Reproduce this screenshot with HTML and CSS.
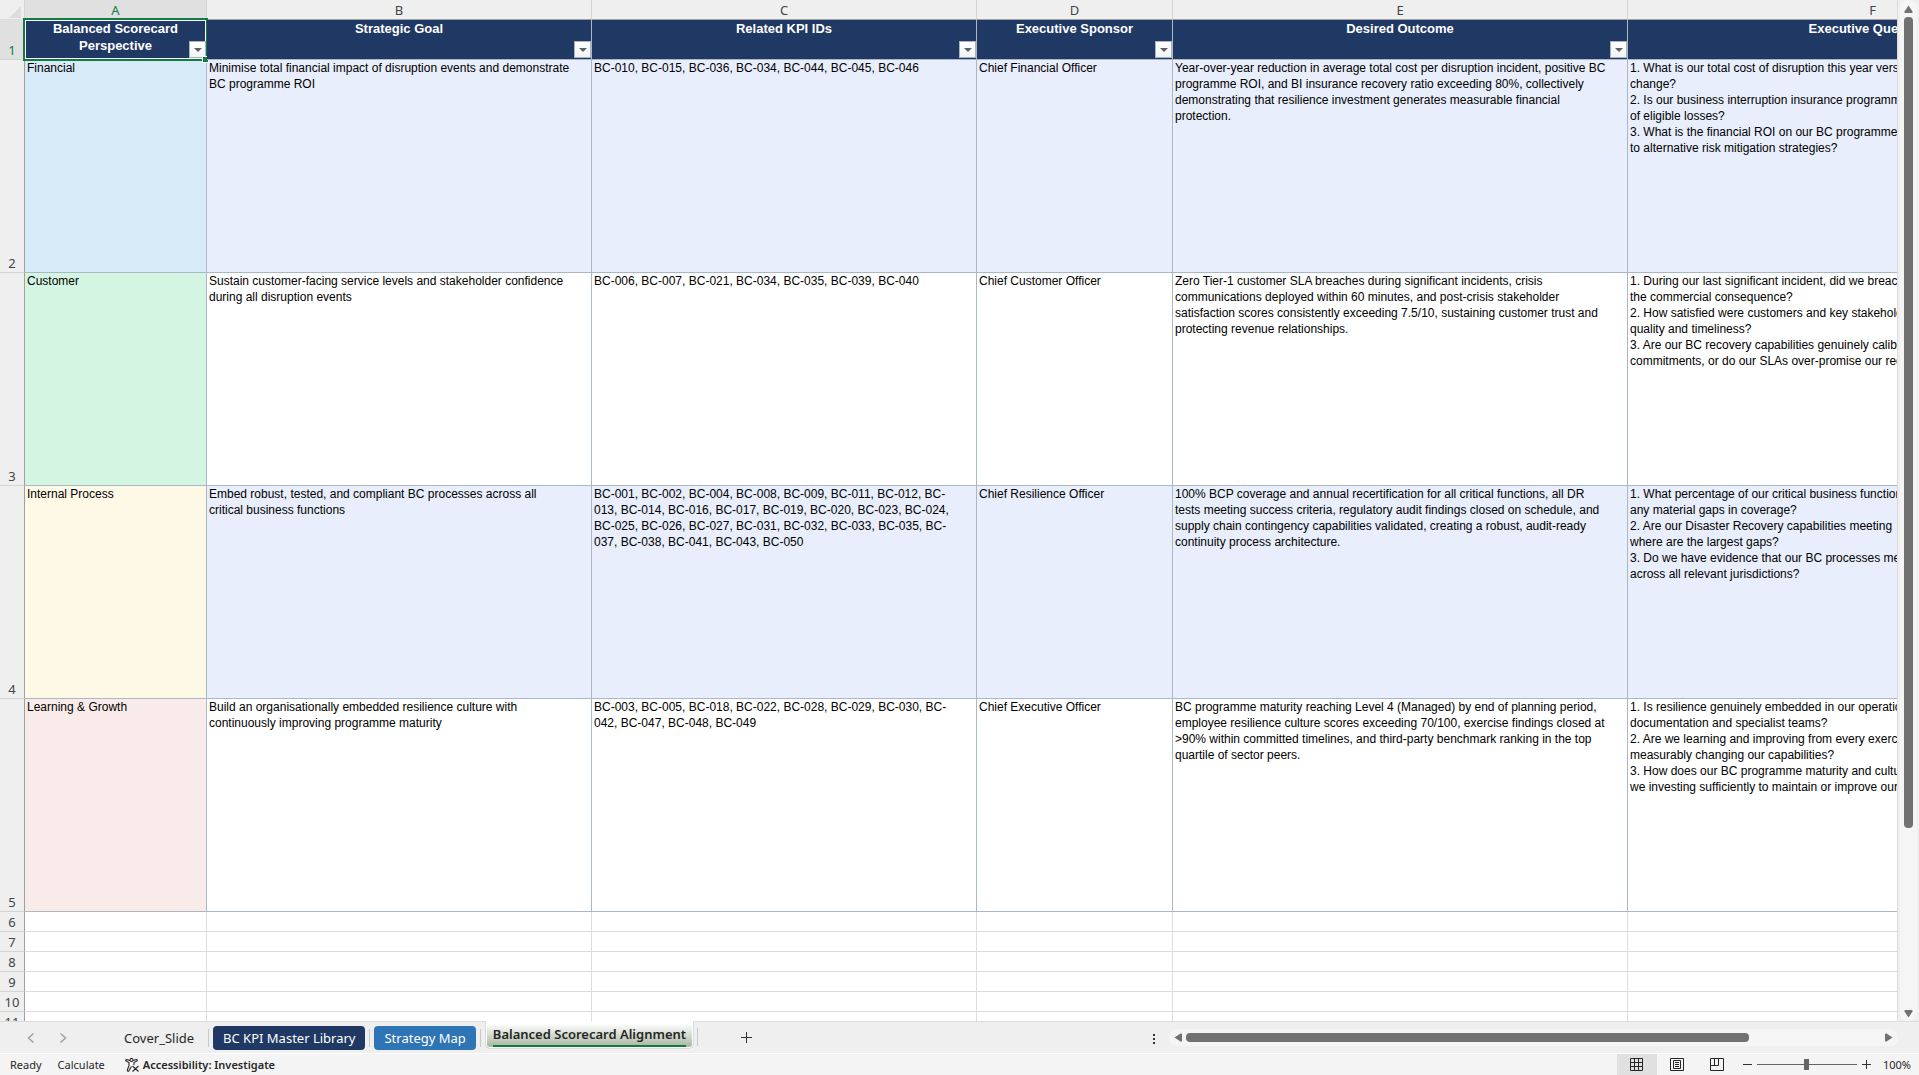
FILE: index.html
```html
<!DOCTYPE html>
<html lang="en">
<head>
  <meta charset="UTF-8" />
  <meta name="viewport" content="width=device-width, initial-scale=1.0"/>
  <title>Balanced Scorecard Alignment</title>
  <link rel="stylesheet" href="styles.css">
</head>
<body>
  <div class="workspace">
    <div class="sheet">
      <table class="grid">
        <colgroup>
          <col class="col-num"><col class="col-a"><col class="col-b"><col class="col-c"><col class="col-d"><col class="col-e"><col class="col-f">
        </colgroup>
        <thead>
          <tr class="letters">
            <th class="corner"><svg width="12" height="12" viewBox="0 0 12 12"><path d="M12 0v12H0z" fill="#dcdcdc"/></svg></th>
            <th class="selected">A</th><th>B</th><th>C</th><th>D</th><th>E</th><th>F</th>
          </tr>
        </thead>
        <tbody>
          <tr class="titles">
            <th class="num selected">1</th>
            <td class="active-cell">Balanced Scorecard<br>Perspective<button class="filter" aria-label="Filter perspective"></button></td>
            <td>Strategic Goal<button class="filter" aria-label="Filter goal"></button></td>
            <td>Related KPI IDs<button class="filter" aria-label="Filter KPI IDs"></button></td>
            <td>Executive Sponsor<button class="filter" aria-label="Filter sponsor"></button></td>
            <td>Desired Outcome<button class="filter" aria-label="Filter outcome"></button></td>
            <td>Executive Questions</td>
          </tr>
          <tr class="data banded">
            <th class="num">2</th>
            <td class="financial">Financial</td>
            <td>Minimise total financial impact of disruption events and demonstrate<br>BC programme ROI</td>
            <td>BC-010, BC-015, BC-036, BC-034, BC-044, BC-045, BC-046</td>
            <td>Chief Financial Officer</td>
            <td>Year-over-year reduction in average total cost per disruption incident, positive BC<br>programme ROI, and BI insurance recovery ratio exceeding 80%, collectively<br>demonstrating that resilience investment generates measurable financial<br>protection.</td>
            <td>1. What is our total cost of disruption this year versus<br>change?<br>2. Is our business interruption insurance programme<br>of eligible losses?<br>3. What is the financial ROI on our BC programme<br>to alternative risk mitigation strategies?</td>
          </tr>
          <tr class="data">
            <th class="num">3</th>
            <td class="customer">Customer</td>
            <td>Sustain customer-facing service levels and stakeholder confidence<br>during all disruption events</td>
            <td>BC-006, BC-007, BC-021, BC-034, BC-035, BC-039, BC-040</td>
            <td>Chief Customer Officer</td>
            <td>Zero Tier-1 customer SLA breaches during significant incidents, crisis<br>communications deployed within 60 minutes, and post-crisis stakeholder<br>satisfaction scores consistently exceeding 7.5/10, sustaining customer trust and<br>protecting revenue relationships.</td>
            <td>1. During our last significant incident, did we breach<br>the commercial consequence?<br>2. How satisfied were customers and key stakeholders<br>quality and timeliness?<br>3. Are our BC recovery capabilities genuinely calibrated<br>commitments, or do our SLAs over-promise our recovery</td>
          </tr>
          <tr class="data banded">
            <th class="num">4</th>
            <td class="process">Internal Process</td>
            <td>Embed robust, tested, and compliant BC processes across all<br>critical business functions</td>
            <td>BC-001, BC-002, BC-004, BC-008, BC-009, BC-011, BC-012, BC-<br>013, BC-014, BC-016, BC-017, BC-019, BC-020, BC-023, BC-024,<br>BC-025, BC-026, BC-027, BC-031, BC-032, BC-033, BC-035, BC-<br>037, BC-038, BC-041, BC-043, BC-050</td>
            <td>Chief Resilience Officer</td>
            <td>100% BCP coverage and annual recertification for all critical functions, all DR<br>tests meeting success criteria, regulatory audit findings closed on schedule, and<br>supply chain contingency capabilities validated, creating a robust, audit-ready<br>continuity process architecture.</td>
            <td>1. What percentage of our critical business functions<br>any material gaps in coverage?<br>2. Are our Disaster Recovery capabilities meeting<br>where are the largest gaps?<br>3. Do we have evidence that our BC processes meet<br>across all relevant jurisdictions?</td>
          </tr>
          <tr class="data">
            <th class="num">5</th>
            <td class="learning">Learning &amp; Growth</td>
            <td>Build an organisationally embedded resilience culture with<br>continuously improving programme maturity</td>
            <td>BC-003, BC-005, BC-018, BC-022, BC-028, BC-029, BC-030, BC-<br>042, BC-047, BC-048, BC-049</td>
            <td>Chief Executive Officer</td>
            <td>BC programme maturity reaching Level 4 (Managed) by end of planning period,<br>employee resilience culture scores exceeding 70/100, exercise findings closed at<br>&gt;90% within committed timelines, and third-party benchmark ranking in the top<br>quartile of sector peers.</td>
            <td>1. Is resilience genuinely embedded in our operations<br>documentation and specialist teams?<br>2. Are we learning and improving from every exercise<br>measurably changing our capabilities?<br>3. How does our BC programme maturity and culture<br>we investing sufficiently to maintain or improve our</td>
          </tr>
          <tr><th class="num">6</th><td></td><td></td><td></td><td></td><td></td><td></td></tr>
          <tr><th class="num">7</th><td></td><td></td><td></td><td></td><td></td><td></td></tr>
          <tr><th class="num">8</th><td></td><td></td><td></td><td></td><td></td><td></td></tr>
          <tr><th class="num">9</th><td></td><td></td><td></td><td></td><td></td><td></td></tr>
          <tr><th class="num">10</th><td></td><td></td><td></td><td></td><td></td><td></td></tr>
          <tr><th class="num">11</th><td></td><td></td><td></td><td></td><td></td><td></td></tr>
        </tbody>
      </table>
    </div>
    <div class="scroll-v">
      <button class="arrow" aria-label="Scroll up"><svg width="9" height="8" viewBox="0 0 9 8"><path d="M4.5 0.5L8.5 6.5Q9 8 7.5 8h-6Q0 8 0.5 6.5z" fill="#717171"/></svg></button>
      <div class="track"><div class="thumb"></div></div>
      <button class="arrow" aria-label="Scroll down"><svg width="9" height="8" viewBox="0 0 9 8"><path d="M4.5 7.5L8.5 1.5Q9 0 7.5 0h-6Q0 0 0.5 1.5z" fill="#717171"/></svg></button>
    </div>
  </div>

  <div class="tab-bar">
    <div class="tab-nav">
      <button aria-label="Previous sheet"><svg width="8" height="12" viewBox="0 0 8 12"><path d="M6.5 1.5L1.5 6l5 4.5" fill="none" stroke="#a0a0a0" stroke-width="1.5"/></svg></button>
      <button aria-label="Next sheet"><svg width="8" height="12" viewBox="0 0 8 12"><path d="M1.5 1.5l5 4.5-5 4.5" fill="none" stroke="#a0a0a0" stroke-width="1.5"/></svg></button>
    </div>
    <div class="tabs">
      <button class="tab">Cover_Slide</button>
      <button class="tab navy">BC KPI Master Library</button>
      <button class="tab blue">Strategy Map</button>
      <button class="tab current"><span>Balanced Scorecard Alignment</span></button>
      <button class="add" aria-label="New sheet"><svg width="11" height="11" viewBox="0 0 11 11"><path d="M5.5 0v11M0 5.5h11" stroke="#333" fill="none"/></svg></button>
    </div>
    <button class="more" aria-label="More"><svg width="2" height="10" viewBox="0 0 2 10"><path d="M0 0h2v2H0zM0 4h2v2H0zM0 8h2v2H0z" fill="#333"/></svg></button>
    <div class="scroll-h">
      <button class="arrow" aria-label="Scroll left"><svg width="8" height="9" viewBox="0 0 8 9"><path d="M0.5 4.5L6.5 0.5Q8 0 8 1.5v6Q8 9 6.5 8.5z" fill="#717171"/></svg></button>
      <div class="track"><div class="thumb"></div></div>
      <button class="arrow" aria-label="Scroll right"><svg width="8" height="9" viewBox="0 0 8 9"><path d="M7.5 4.5L1.5 0.5Q0 0 0 1.5v6Q0 9 1.5 8.5z" fill="#717171"/></svg></button>
    </div>
  </div>

  <div class="status-bar">
    <span>Ready</span>
    <span>Calculate</span>
    <button class="accessibility">
      <svg width="14" height="14" viewBox="0 0 14 14" fill="none" stroke="#262626" stroke-width="1.1">
        <circle cx="6.5" cy="2" r="1.5"/>
        <path d="M5 2.5L1.8 1.5Q0.5 1.5 0.7 2.7L4 4.6v3L2.3 12q0 1.5 1.3 1.2L6.5 8.5M8 2.5l3.2-1q1.3 0 1.1 1.2L9 4.6v2.4M7.5 8l6 5.5M13.5 8l-6 5.5"/>
      </svg>
      Accessibility: Investigate
    </button>
    <div class="views">
      <button class="view on" aria-label="Normal"><svg width="14" height="14" viewBox="0 0 14 14"><path d="M.5 .5h12v12H.5zM4.5 .5v12M8.5 .5v12M.5 4.5h12M.5 8.5h12" fill="none" stroke="#262626"/></svg></button>
      <button class="view" aria-label="Page layout"><svg width="14" height="14" viewBox="0 0 14 14"><path d="M.5 .5h13v12H.5zM3.5 2.5h7v8h-7zM5 4.5h4M5 6.5h4M5 8.5h4" fill="none" stroke="#262626"/></svg></button>
      <button class="view" aria-label="Page break preview"><svg width="14" height="14" viewBox="0 0 14 14"><path d="M.5 .5h13v12H.5zM4.5 .5v7M8.5 .5v7M.5 7.5h8" fill="none" stroke="#262626"/></svg></button>
    </div>
    <div class="zoom">
      <button aria-label="Zoom out"><svg width="9" height="9" viewBox="0 0 9 9"><path d="M0 4.5h9" stroke="#333"/></svg></button>
      <input type="range" min="0" max="200" value="100" aria-label="Zoom">
      <button aria-label="Zoom in"><svg width="9" height="9" viewBox="0 0 9 9"><path d="M0 4.5h9M4.5 0v9" stroke="#333"/></svg></button>
      <button class="percent">100%</button>
    </div>
  </div>
</body>
</html>
```
FILE: styles.css
```css
:root {
  --chrome: #efefef;
  --line: #dcdcdc;
  --cell-line: #a9b8c4;
  --navy: #1f3864;
  --green: #107c41;
  --grey: #717171;
  --ui: 'Noto Sans', 'Open Sans', sans-serif;
}
* { box-sizing: border-box; margin: 0; padding: 0; }
body {
  height: 100vh;
  display: flex;
  flex-direction: column;
  overflow: hidden;
  background: var(--chrome);
  color: #262626;
  font-family: var(--ui);
}
button {
  background: none;
  border: none;
  font: inherit;
  color: inherit;
}
svg { display: block; flex: none; }

/* sheet */
.workspace { flex: 1; min-height: 0; display: flex; }
.sheet {
  flex: 1; min-width: 0;
  overflow: hidden;
  background: #fff;
  border-right: 1px solid var(--line);
}
.grid {
  table-layout: fixed;
  width: 2118px;
  border-collapse: separate;
  border-spacing: 0;
}
.col-num { width: 25px; }
.col-a { width: 182px; }
.col-b, .col-c { width: 385px; }
.col-d { width: 196px; }
.col-e { width: 455px; }
.col-f { width: 490px; }
.grid tr { height: 20px; }
.grid td {
  border-right: 1px solid var(--line);
  border-bottom: 1px solid var(--line);
  vertical-align: top;
  white-space: nowrap;
}
.grid th {
  background: var(--chrome);
  color: #444;
  font-weight: 400;
  font-size: 13px;
  line-height: 18px;
}
.letters th {
  border-right: 1px solid #d4d4d4;
  border-bottom: 1px solid #a0a0a0;
  padding-top: 1px;
}
.letters .corner { padding: 4px 0 0 9px; border-bottom-color: var(--line); }
.grid .num {
  border-right: 1px solid #a0a0a0;
  border-bottom: 1px solid #d4d4d4;
  vertical-align: bottom;
}
.grid .selected { background: #e0e0e0; color: var(--green); }
.grid .titles { height: 40px; }
.titles td {
  position: relative;
  background: var(--navy);
  border-color: var(--cell-line);
  color: #fff;
  font: bold 13px/17px 'Liberation Sans', Arial, sans-serif;
  text-align: center;
}
.grid .data { height: 213px; }
.data td {
  border-color: var(--cell-line);
  padding: 0 2px;
  color: #000;
  font: 12px/16px 'Liberation Sans', Arial, sans-serif;
}
.banded td { background: #e8eefb; }
.data .financial { background: #d6eaf8; }
.data .customer { background: #d5f5e3; }
.data .process { background: #fef9e7; }
.data .learning { background: #f9ebea; }

.filter {
  position: absolute; right: 0; bottom: 1px;
  width: 17px; height: 17px;
  background: linear-gradient(#fff, #f1f3f6);
  border: 1px solid #a9b2bd;
}
.filter::after {
  content: '';
  position: absolute; left: 4px; top: 6px;
  border: 4px solid transparent;
  border-top-color: #606060;
  border-bottom: none;
}
.active-cell::before {
  content: '';
  position: absolute; inset: -2px;
  border: 2px solid var(--green);
  box-shadow: inset 0 0 0 1px #fff;
}
.active-cell::after {
  content: '';
  position: absolute; right: -2px; bottom: -3px;
  width: 5px; height: 5px;
  background: var(--green);
  box-shadow: 0 0 0 1px #fff;
}

/* scroll bars */
.arrow { flex: none; display: flex; }
.track { flex: 1; }
.thumb { background: var(--grey); border-radius: 4px; }
.scroll-v {
  width: 17px;
  margin: 0 2px;
  padding: 5px 4px 3px;
  display: flex;
  flex-direction: column;
  gap: 4px;
  background: #f5f5f5;
  border-radius: 8px;
}
.scroll-v .track { min-height: 0; }
.scroll-v .thumb { width: 9px; height: 82%; }
.scroll-h {
  width: 38%;
  height: 17px;
  margin-right: 21px;
  padding: 0 5px;
  display: flex;
  align-items: center;
  gap: 4px;
  background: #f5f5f5;
  border-radius: 8px;
}
.scroll-h .thumb { width: 81%; height: 9px; }

/* sheet tabs */
.tab-bar {
  height: 32px;
  display: flex;
  align-items: center;
  border-top: 1px solid var(--line);
  font-size: 13px;
}
.tab-nav { display: flex; gap: 24px; padding-left: 27px; width: 114px; }
.tabs { flex: 1; display: flex; align-items: center; height: 100%; }
.tab {
  position: relative;
  height: 24px;
  padding: 0 10px;
  margin-right: 9px;
  border-radius: 4px;
  line-height: 24px;
  white-space: nowrap;
}
.tab::after {
  content: '';
  position: absolute; right: -5px; top: 3px;
  width: 1px; height: 18px;
  background: #c8c8c8;
}
.navy { background: var(--navy); color: #fff; }
.blue { background: #2e75b6; color: #fff; }
.current {
  align-self: flex-start;
  height: 28px;
  margin-top: -1px;
  padding: 0 7px;
  background: linear-gradient(#fff 10%, #a3b39b);
  border: 1px solid var(--line);
  border-top: none;
  border-radius: 0 0 5px 5px;
  box-shadow: inset 0 0 0 1px #fff;
  font-weight: 600;
}
.current::after { top: 7px; }
.current span {
  display: block;
  height: 25px;
  border-bottom: 2px solid var(--green);
}
.add { margin-left: 38px; }
.more { margin-right: 14px; padding-top: 2px; }

/* status bar */
.status-bar {
  height: 22px;
  display: flex;
  align-items: center;
  padding-left: 10px;
  background: #f4f4f4;
  border-top: 1px solid #fff;
  font-size: 11px;
  line-height: 21px;
}
.status-bar span { margin-right: 16px; }
.accessibility {
  display: flex;
  align-items: center;
  gap: 4px;
  margin-left: 4px;
  font-weight: 600;
}
.views { display: flex; margin-left: auto; }
.view {
  width: 40px; height: 21px;
  display: flex;
  align-items: center;
  justify-content: center;
}
.view.on { background: #e0e0e0; }
.zoom { display: flex; align-items: center; margin: 0 8px 0 6px; }
.zoom input {
  appearance: none;
  width: 100px; height: 11px;
  margin: 0 5px;
  background: linear-gradient(#666, #666) center / 100% 1px no-repeat;
}
.zoom input::-webkit-slider-thumb {
  appearance: none;
  width: 5px; height: 11px;
  background: #666;
}
.percent { margin-left: 12px; }
```
